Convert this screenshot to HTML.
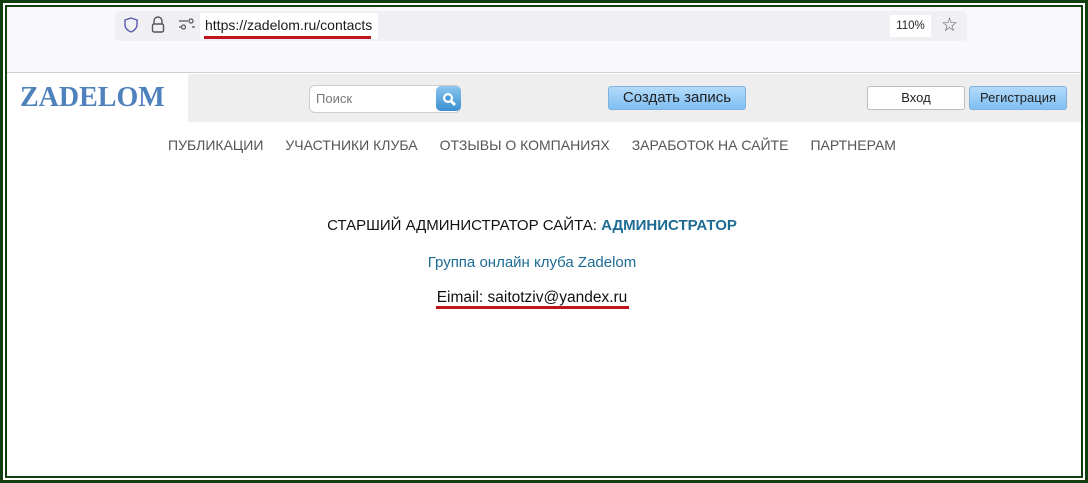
<!DOCTYPE html>
<html><head><meta charset="utf-8"><style>
*{margin:0;padding:0;box-sizing:border-box}
body{width:1088px;height:483px;position:relative;background:#fff;font-family:"Liberation Sans","DejaVu Sans",sans-serif;overflow:hidden}
.o{position:absolute;left:0;top:0;width:1088px;height:483px;border:3px solid #123f12}
.i{position:absolute;left:5px;top:5px;width:1078px;height:473px;border:2px solid #123f12}
.a{position:absolute}
.c{position:absolute;left:0;width:1064px;text-align:center}
</style></head><body>
<div class="a" style="left:7px;top:7px;width:1074px;height:66px;background:#f9f9fb;border-bottom:1px solid #cfcfd3"></div>
<div class="a" style="left:115px;top:11px;width:852px;height:30px;background:#f0f0f4;border-radius:4px"></div>
<svg class="a" style="left:122px;top:16px" width="18" height="18" viewBox="0 0 18 18"><path d="M9 2 L15 4 V9 C15 12 12 15 9 16 C6 15 3 12 3 9 V4 Z" fill="none" stroke="#5b5bb0" stroke-width="1.4"/></svg>
<svg class="a" style="left:150px;top:16px" width="16" height="18" viewBox="0 0 16 18"><path d="M4 8 V5 a4 4 0 0 1 8 0 V8" fill="none" stroke="#555" stroke-width="1.4"/><rect x="2.5" y="8" width="11" height="8" rx="1.5" fill="none" stroke="#555" stroke-width="1.4"/></svg>
<svg class="a" style="left:178px;top:18px" width="18" height="12" viewBox="0 0 18 12"><path d="M1 3 H10 M14 9 H17 M1 9 H3" stroke="#555" stroke-width="1.3"/><circle cx="13" cy="3" r="2" fill="none" stroke="#555" stroke-width="1.2"/><circle cx="5.5" cy="9" r="2" fill="none" stroke="#555" stroke-width="1.2"/></svg>
<div class="a" style="left:200px;top:13px;width:178px;height:26px;background:#fff"></div>
<div class="a" style="left:205px;top:17px;font-size:14px;color:#1b1b1b">https://zadelom.ru/contacts</div>
<div class="a" style="left:204px;top:36px;width:167px;height:3px;background:#c0161b"></div>
<div class="a" style="left:890px;top:15px;width:41px;height:22px;background:#fff;font-size:11.5px;color:#222;text-align:center;line-height:22px">110%</div>
<div class="a" style="left:941px;top:14px;font-size:19px;color:#555">☆</div>
<div class="a" style="left:7px;top:74px;width:1074px;height:48px;background:#eeeeee"></div>
<div class="a" style="left:7px;top:74px;width:181px;height:48px;background:#fff"></div>
<div class="a" style="left:20px;top:82px;font-family:'Liberation Serif',serif;font-weight:bold;font-size:28px;color:#4f82bd">ZADELOM</div>
<div class="a" style="left:309px;top:85px;width:152px;height:28px;background:#fff;border:1px solid #ccc;border-radius:6px"></div>
<div class="a" style="left:316px;top:91px;font-size:13px;color:#777">Поиск</div>
<div class="a" style="left:436px;top:86px;width:25px;height:25px;border-radius:5px;background:linear-gradient(#8cc6ef,#3a8fd0)"></div>
<svg class="a" style="left:440px;top:90px" width="18" height="18" viewBox="0 0 18 18"><circle cx="8" cy="8" r="5" fill="#fff"/><circle cx="8" cy="8" r="2.8" fill="#4c9bd8"/><path d="M11 11 L15 15" stroke="#fff" stroke-width="3"/></svg>
<div class="a" style="left:608px;top:86px;width:138px;height:24px;border:1px solid #7fb2e0;border-radius:3px;background:linear-gradient(#b3dafa,#7fbff2);font-size:15px;color:#222;text-align:center;line-height:22px">Создать запись</div>
<div class="a" style="left:867px;top:86px;width:98px;height:24px;border:1px solid #bbb;border-radius:3px;background:#fff;font-size:13px;color:#222;text-align:center;line-height:22px">Вход</div>
<div class="a" style="left:969px;top:86px;width:98px;height:24px;border:1px solid #7fb2e0;border-radius:3px;background:linear-gradient(#b3dafa,#7fbff2);font-size:13px;color:#222;text-align:center;line-height:22px">Регистрация</div>
<div class="c" style="top:137px;font-size:14px;color:#555"><span style="margin:0 11px">ПУБЛИКАЦИИ</span><span style="margin:0 11px">УЧАСТНИКИ КЛУБА</span><span style="margin:0 11px">ОТЗЫВЫ О КОМПАНИЯХ</span><span style="margin:0 11px">ЗАРАБОТОК НА САЙТЕ</span><span style="margin:0 11px">ПАРТНЕРАМ</span></div>
<div class="c" style="top:217px;font-size:15px;color:#111">СТАРШИЙ АДМИНИСТРАТОР САЙТА: <b style="color:#1e6b94">АДМИНИСТРАТОР</b></div>
<div class="c" style="top:254px;font-size:15px;color:#1e6b94">Группа онлайн клуба Zadelom</div>
<div class="c" style="top:289px;font-size:15.5px;color:#111">Eimail: saitotziv@yandex.ru</div>
<div class="a" style="left:436px;top:306px;width:193px;height:3px;background:#c0161b"></div>
<div class="o"></div><div class="i"></div>
</body></html>
